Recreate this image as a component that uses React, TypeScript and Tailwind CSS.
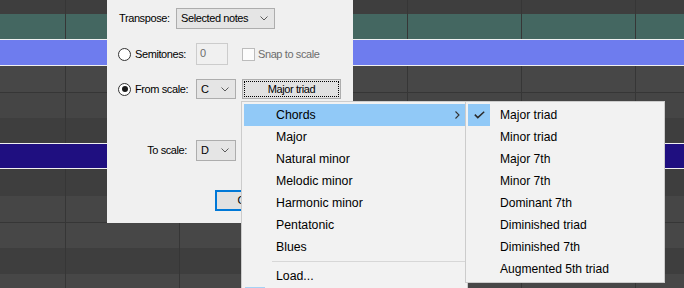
import React from "react";

const grid =
    "bg-[image:repeating-linear-gradient(90deg,transparent_0px,transparent_65px,#363636_65px,#363636_66px,transparent_66px,transparent_114px)]";

const scaleItems = [
    "Major",
    "Natural minor",
    "Melodic minor",
    "Harmonic minor",
    "Pentatonic",
    "Blues",
];

const chordItems = [
    "Major triad",
    "Minor triad",
    "Major 7th",
    "Minor 7th",
    "Dominant 7th",
    "Diminished triad",
    "Diminished 7th",
    "Augmented 5th triad",
];

function Chevron() {
    return (
        <svg width="8" height="5" viewBox="0 0 8 5" className="shrink-0">
            <polyline points="0.5,0.5 4,4 7.5,0.5" fill="none" stroke="#5a5a5a" strokeWidth="1" />
        </svg>
    );
}

function Combo({ value, width }: { value: string; width: string }) {
    return (
        <div className={`flex h-full ${width} items-center justify-between border border-[#adadad] bg-[#e5e5e5] pl-[4px] pr-[6px]`}>
            <span>{value}</span>
            <Chevron />
        </div>
    );
}

function Radio({ checked }: { checked?: boolean }) {
    return (
        <div className="flex h-[13px] w-[13px] shrink-0 items-center justify-center rounded-full border border-[#333333] bg-white">
            {checked && <div className="h-[6px] w-[6px] rounded-full bg-[#1a1a1a]" />}
        </div>
    );
}

export default function App() {
    return (
        <div className="relative h-[288px] w-[684px] overflow-hidden bg-[#3e3e3e] font-['Liberation_Sans',Arial,sans-serif]">
            {/* PIANO ROLL BACKGROUND */}
            <div className="flex flex-col">
                <div className={`h-[14px] bg-[#3e3e3e] ${grid}`} />
                <div className={`h-[25px] bg-[#446761] ${grid}`} />
                <div className="h-[27px] border-y border-[#f0f0f0] bg-[#6e7cee]" />
                <div className={`h-[26px] bg-[#474747] ${grid}`} />
                <div className="h-px bg-[#363636]" />
                <div className={`h-[25px] bg-[#454545] ${grid}`} />
                <div className={`h-[25px] bg-[#3e3e3e] ${grid}`} />
                <div className="h-[26px] border-y border-[#f0f0f0] bg-[#1f0f80]" />
                <div className={`h-[27px] bg-[#3e3e3e] ${grid}`} />
                <div className={`h-[26px] bg-[#464646] ${grid}`} />
                <div className="h-px bg-[#363636]" />
                <div className={`h-[25px] bg-[#474747] ${grid}`} />
                <div className={`h-[26px] bg-[#3e3e3e] ${grid}`} />
                <div className={`h-[14px] bg-[#474747] ${grid}`} />
            </div>

            {/* DIALOG */}
            <div className="absolute left-[107px] top-0 flex h-[223px] w-[246px] flex-col bg-[#f0f0f0] pl-[11px] pt-[8px] text-[11px] tracking-[-0.4px] text-black">
                <div className="flex h-[21px] items-center">
                    <span className="w-[58px] pl-[1px]">Transpose:</span>
                    <Combo value="Selected notes" width="w-[99px]" />
                </div>

                <div className="mt-[14px] flex h-[22px] items-center">
                    <div className="flex w-[78px] items-center gap-[4px]">
                        <Radio />
                        <span>Semitones:</span>
                    </div>
                    <div className="flex h-full w-[32px] items-center border border-[#cccccc] bg-[#f0f0f0] pb-[2px] pl-[3px] text-[#6d6d6d]">
                        0
                    </div>
                    <div className="ml-[14px] h-[13px] w-[13px] border border-[#bcbcbc] bg-[#fcfcfc]" />
                    <span className="ml-[3px] text-[#6d6d6d]">Snap to scale</span>
                </div>

                <div className="mt-[14px] flex h-[20px] items-center">
                    <div className="flex w-[78px] items-center gap-[4px]">
                        <Radio checked />
                        <span>From scale:</span>
                    </div>
                    <Combo value="C" width="w-[40px]" />
                    <div className="ml-[6px] h-full w-[99px] border border-[#adadad] bg-[#e1e1e1] p-px">
                        <div className="flex h-full items-center justify-center border border-dotted border-black">
                            Major triad
                        </div>
                    </div>
                </div>

                <div className="mt-[41px] flex h-[21px] items-center">
                    <span className="w-[78px] pr-[9px] text-right">To scale:</span>
                    <Combo value="D" width="w-[40px]" />
                </div>

                <div className="ml-[97px] mt-[29px] flex h-[21px] w-[60px] items-center justify-center border-2 border-[#0078d7] bg-[#e1e1e1]">
                    OK
                </div>
            </div>

            {/* SCALE MENU */}
            <div className="absolute left-[241px] top-[101px] w-[227px] border border-[#cccccc] bg-[#f2f2f2] p-[2px] text-[12.3px] text-black">
                <div className="flex h-[22px] items-center justify-between bg-[#91c9f7] pl-[32px] pr-[5px]">
                    <span>Chords</span>
                    <svg width="5" height="8" viewBox="0 0 5 8">
                        <polyline points="0.5,0.5 4,4 0.5,7.5" fill="none" stroke="#333" strokeWidth="1.1" />
                    </svg>
                </div>
                {scaleItems.map((item) => (
                    <div key={item} className="flex h-[22px] items-center pl-[32px]">
                        {item}
                    </div>
                ))}
                <div className="flex h-[7px] items-center pl-[28px]">
                    <div className="h-px w-full bg-[#d7d7d7]" />
                </div>
                <div className="flex h-[22px] items-center pl-[32px]">Load...</div>
                <div className="h-[22px]">
                    <div className="ml-px h-[16px] w-[20px] bg-[#a6d2f5]" />
                </div>
            </div>

            {/* CHORDS SUBMENU */}
            <div className="absolute left-[465px] top-[101px] w-[200px] border border-[#cccccc] bg-[#f2f2f2] p-[2px] text-[12.1px] text-black">
                {chordItems.map((item, index) => (
                    <div key={item} className="relative flex h-[22px] items-center pl-[32px]">
                        {index === 0 && (
                            <div className="absolute left-0 top-0 flex h-[22px] w-[22px] items-center justify-center bg-[#91c9f7]">
                                <svg width="11" height="8" viewBox="0 0 11 8">
                                    <polyline points="0.8,3.6 3.8,6.6 10.2,0.8" fill="none" stroke="#2b2b2b" strokeWidth="1.5" />
                                </svg>
                            </div>
                        )}
                        <span>{item}</span>
                    </div>
                ))}
            </div>
        </div>
    );
}
